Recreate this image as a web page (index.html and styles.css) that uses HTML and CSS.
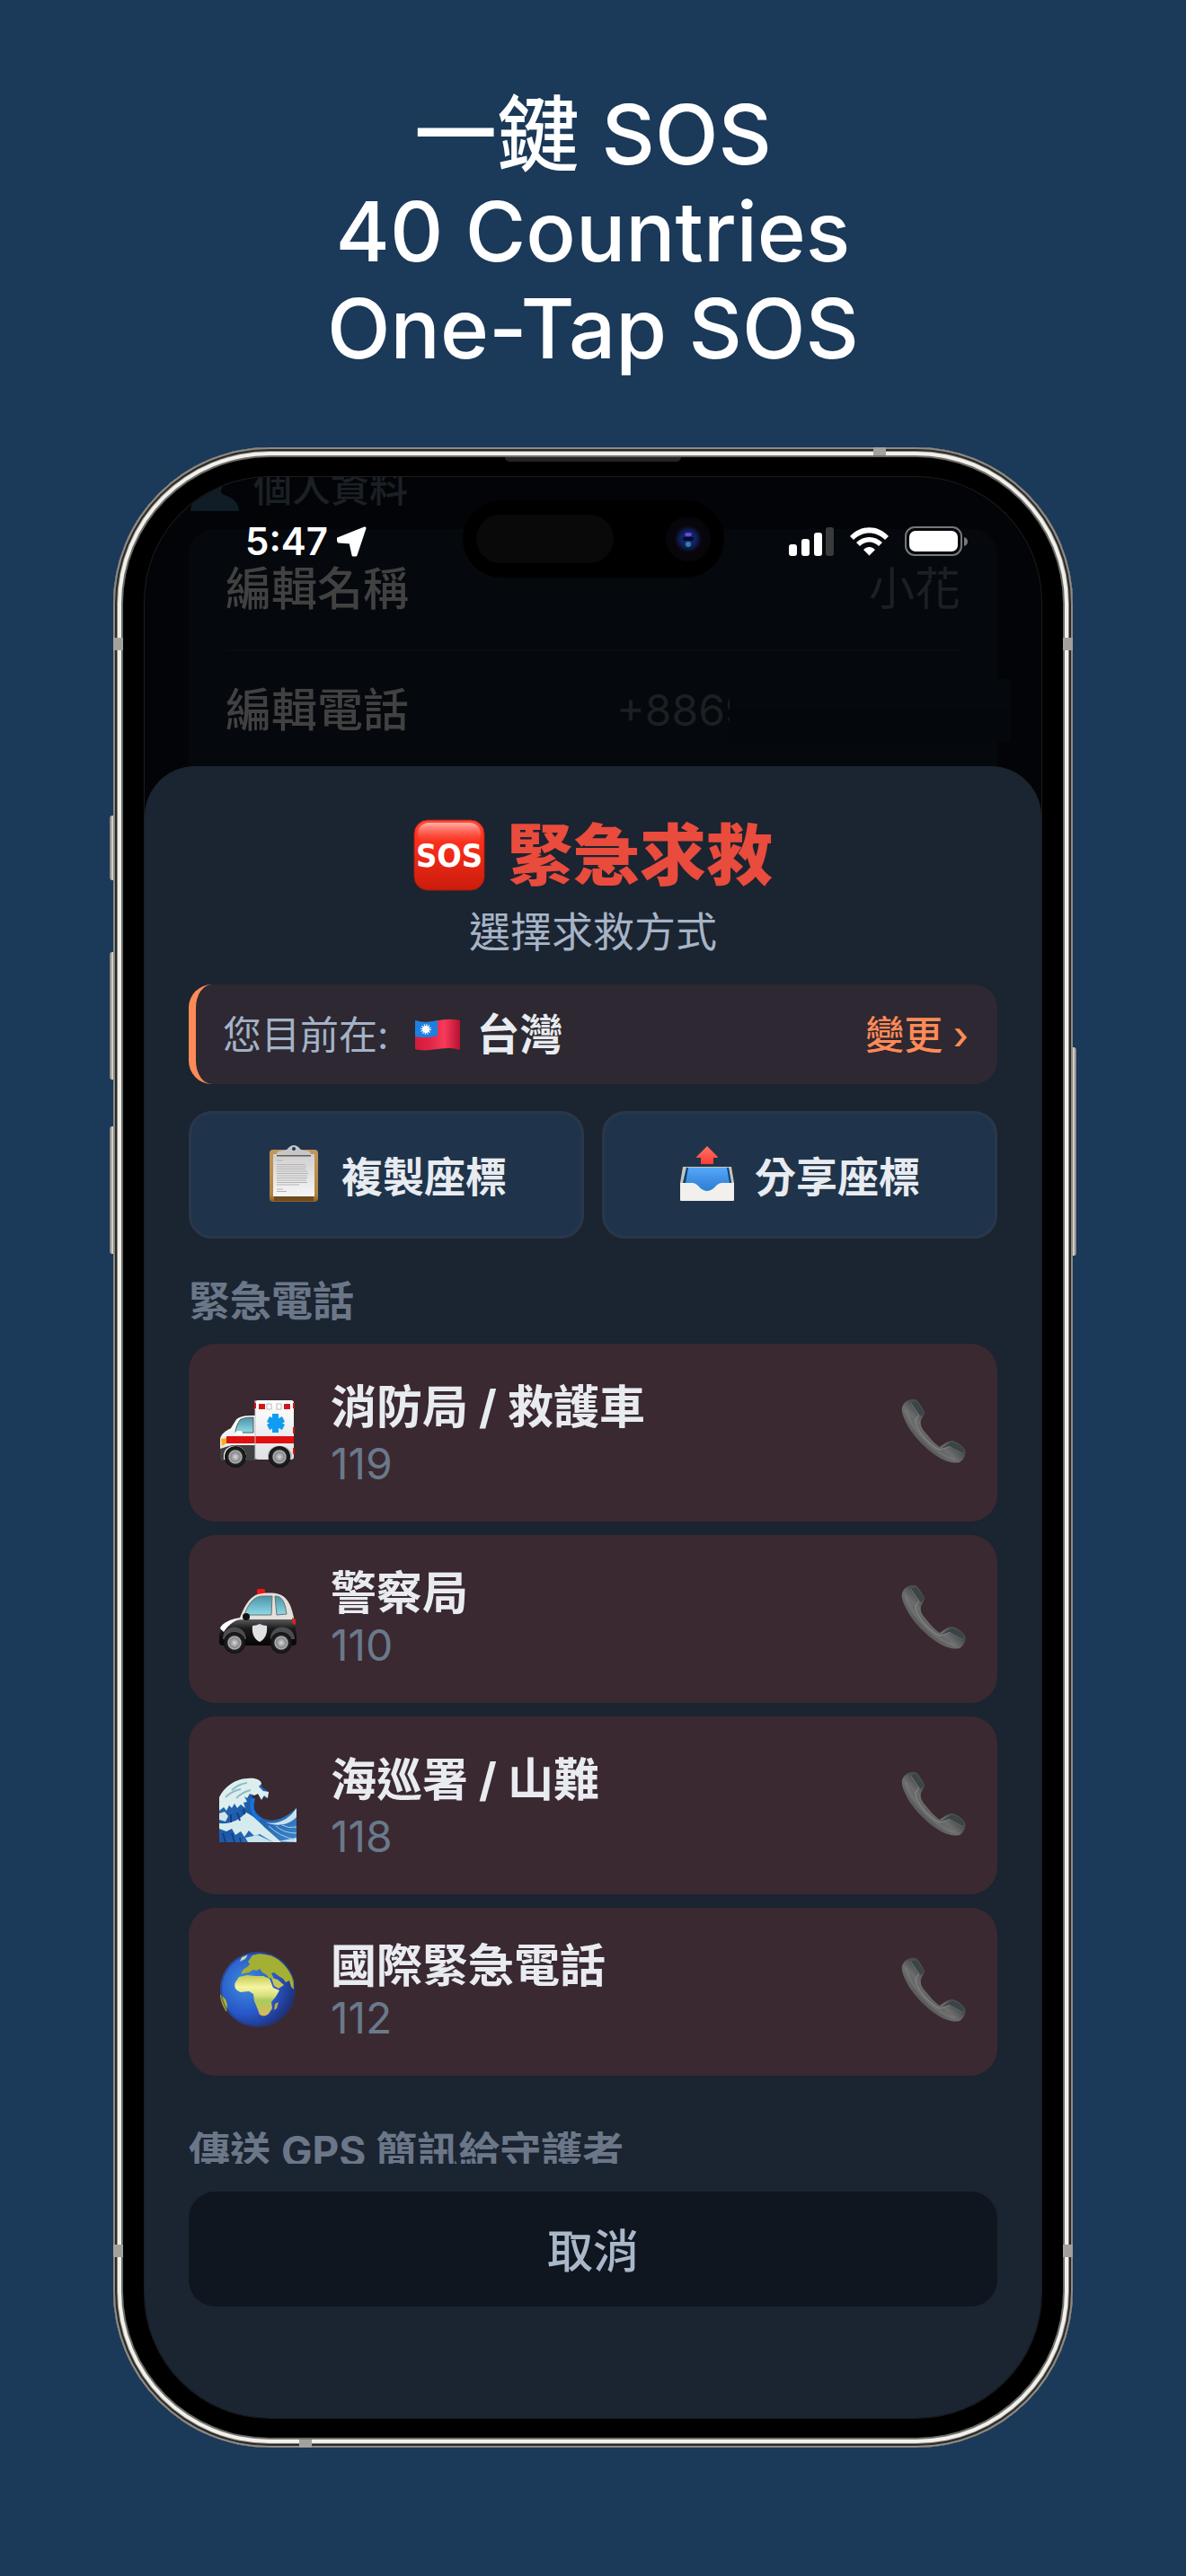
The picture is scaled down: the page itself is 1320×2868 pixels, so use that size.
FILE: index.html
```html
<!DOCTYPE html>
<html lang="zh-Hant">
<head>
<meta charset="utf-8">
<meta name="viewport" content="width=device-width, initial-scale=1">
<title>一鍵 SOS</title>
<link rel="stylesheet" href="styles.css">
</head>
<body>
<svg class="defs" aria-hidden="true">
  <defs>
    <linearGradient id="sosRed" x1="0" y1="0" x2="0" y2="1"><stop offset="0" stop-color="#ff4a38"/><stop offset=".3" stop-color="#fb2f1c"/><stop offset="1" stop-color="#cb1c0c"/></linearGradient>
    <linearGradient id="sosShine" x1="0" y1="0" x2="0" y2="1"><stop offset="0" stop-color="#ffb3ab"/><stop offset="1" stop-color="#ff4030" stop-opacity="0"/></linearGradient>
    <linearGradient id="flagRed" x1="0" y1="0" x2="1" y2="0"><stop offset="0" stop-color="#d21c3c"/><stop offset=".3" stop-color="#dd2444"/><stop offset=".65" stop-color="#f63a5a"/><stop offset="1" stop-color="#b91031"/></linearGradient>
    <linearGradient id="paper" x1="0" y1="0" x2="0" y2="1"><stop offset="0" stop-color="#cfcfcf"/><stop offset="1" stop-color="#f7f7f7"/></linearGradient>
    <linearGradient id="board" x1="0" y1="0" x2="0" y2="1"><stop offset="0" stop-color="#c3975a"/><stop offset=".85" stop-color="#b58442"/><stop offset="1" stop-color="#8a5f28"/></linearGradient>
    <linearGradient id="arrowRed" x1="0" y1="0" x2="0" y2="1"><stop offset="0" stop-color="#ff7468"/><stop offset="1" stop-color="#fb3d33"/></linearGradient>
    <linearGradient id="trayBlue" x1="0" y1="0" x2="0" y2="1"><stop offset="0" stop-color="#55a8fa"/><stop offset=".5" stop-color="#3e8ee4"/><stop offset="1" stop-color="#237fd0"/></linearGradient>
    <linearGradient id="glass" x1="0" y1="0" x2="0" y2="1"><stop offset="0" stop-color="#4a93a6"/><stop offset="1" stop-color="#8edbe8"/></linearGradient>
    <linearGradient id="van" x1="0" y1="0" x2="0" y2="1"><stop offset="0" stop-color="#ffffff"/><stop offset="1" stop-color="#dfe1e3"/></linearGradient>
    <linearGradient id="copBody" x1="0" y1="0" x2="0" y2="1"><stop offset="0" stop-color="#5b5b5d"/><stop offset=".35" stop-color="#1b1b1c"/><stop offset="1" stop-color="#050505"/></linearGradient>
    <linearGradient id="sea" x1="0" y1="0" x2="1" y2="1"><stop offset="0" stop-color="#2a6fb8"/><stop offset=".5" stop-color="#1d59a8"/><stop offset="1" stop-color="#3c88cc"/></linearGradient>
    <radialGradient id="ocean" cx=".35" cy=".42" r=".68"><stop offset="0" stop-color="#3f8fe0"/><stop offset=".6" stop-color="#2756c8"/><stop offset="1" stop-color="#1c2c70"/></radialGradient>
    <linearGradient id="land" x1="0" y1="0" x2="0" y2="1"><stop offset="0" stop-color="#c3c84e"/><stop offset=".3" stop-color="#f6f5a2"/><stop offset=".5" stop-color="#d8df7e"/><stop offset=".62" stop-color="#a9cb5e"/><stop offset="1" stop-color="#dcb85a"/></linearGradient>
    <radialGradient id="hub"><stop offset="0" stop-color="#d9dadd"/><stop offset=".45" stop-color="#85878c"/><stop offset=".58" stop-color="#b5b6b9"/><stop offset=".68" stop-color="#222"/><stop offset="1" stop-color="#101010"/></radialGradient>
    <linearGradient id="handset" x1="0" y1="1" x2="1" y2="0"><stop offset="0" stop-color="#2f3133"/><stop offset=".45" stop-color="#6d6d6d"/><stop offset=".55" stop-color="#4a4e50"/><stop offset="1" stop-color="#3b4245"/></linearGradient>
    <radialGradient id="lens" cx=".5" cy=".5" r=".5"><stop offset="0" stop-color="#1a2d86"/><stop offset=".35" stop-color="#12205c"/><stop offset=".5" stop-color="#0a1230"/><stop offset=".6" stop-color="#08060c"/><stop offset="1" stop-color="#070508"/></radialGradient>
    <symbol id="call" viewBox="0 0 72 72">
      <path d="M1 10C3 3 10 0 16 1C19 2 24 11 26 15C26 19 23 21 22 25C21 30 23 33 27 38C32 44 38 51 43 54C47 51 52 47 56 47C61 47 69 53 71 57C73 62 69 69 65 71C58 73 48 70 38 63C26 55 12 40 6 28C2 20 0 15 1 10Z" fill="url(#handset)"/>
      <path d="M11 5L20 18L16 24C15 30 20 37 27 45C33 51 39 56 43 57L55 53L68 61" fill="none" stroke="#8b8d8d" stroke-width="1.3" opacity=".7"/>
      <path d="M11 5C14 3 17 3 18 5L25 15C25 18 22 21 20 18Z" fill="#3b4447"/><path d="M44 56L55 49C60 48 69 54 70 58L68 61L54 53Z" fill="#3a4346"/>
      <path d="M5 12C8 25 16 36 28 48C37 57 47 65 60 68" fill="none" stroke="#858585" stroke-width="3" opacity=".35"/>
    </symbol>
  </defs>
</svg>

<main class="poster">
  <h1 class="headline">一鍵 SOS<br>40 Countries<br>One-Tap SOS</h1>

  <div class="phone">
    <span class="side side-action"></span>
    <span class="side side-up"></span>
    <span class="side side-down"></span>
    <span class="side side-power"></span>
    <span class="band band-left-top"></span>
    <span class="band band-right-top"></span>
    <span class="band band-left-low"></span>
    <span class="band band-right-low"></span>
    <span class="band band-top"></span>
    <span class="band band-bottom"></span>
    <span class="speaker"></span>

    <div class="screen">
      <section class="profile">
        <h2 class="profile-title">
          <svg class="profile-icon" viewBox="0 0 54 54" aria-hidden="true"><path d="M27 0C36 0 40 7 39 16C38 24 34 28 34 33C36 38 53 37 54 54H0C1 37 18 38 20 33C20 28 16 24 15 16C14 7 18 0 27 0Z" fill="#101c26"/></svg>
          個人資料
        </h2>
        <div class="profile-card">
          <div class="profile-row"><span>編輯名稱</span><span class="profile-value">小花</span></div>
          <div class="profile-row"><span>編輯電話</span><span class="profile-value profile-value-cut">+8869</span><span class="redaction"></span></div>
        </div>
      </section>

      <div class="status">
        <div class="status-time">
          <span>5:47</span>
          <svg width="34" height="34" viewBox="0 0 34 34" aria-hidden="true"><path d="M31 2L21 32H18L15 18L2 17L1 14Z" fill="#fff" stroke="#fff" stroke-width="3" stroke-linejoin="round"/></svg>
        </div>
        <div class="island">
          <span class="island-sensor"></span>
          <svg width="50" height="50" viewBox="0 0 50 50" aria-hidden="true"><circle cx="25" cy="25" r="25" fill="url(#lens)"/><ellipse cx="25" cy="20" rx="4" ry="2" fill="#5a50d8"/><ellipse cx="25" cy="31" rx="3" ry="3" fill="#2f7fb4"/><rect x="19" y="23" width="12" height="4" rx="2" fill="#060a24"/></svg>
        </div>
        <div class="status-icons">
          <svg width="50" height="34" viewBox="0 0 50 34" aria-hidden="true"><rect x="0" y="20" width="9" height="13" rx="3" fill="#fff"/><rect x="14" y="14" width="9" height="19" rx="3" fill="#fff"/><rect x="28" y="7" width="9" height="26" rx="3" fill="#fff"/><rect x="41" y="1" width="9" height="32" rx="3" fill="#3a3a3d"/></svg>
          <svg width="43" height="34" viewBox="0 0 43 34" aria-hidden="true"><path d="M0 11C12-2 31-2 43 11L39 15C29 5 14 5 4 15Z" fill="#fff"/><path d="M7 18C15 10 28 10 36 18L32 22C26 16 17 16 11 22Z" fill="#fff"/><path d="M15 26C19 22 24 22 28 26L22 32Q21 33 21 32Z" fill="#fff"/></svg>
          <svg width="70" height="34" viewBox="0 0 70 34" aria-hidden="true"><rect x="1" y="1" width="62" height="31" rx="10" fill="none" stroke="#77787b" stroke-width="2"/><rect x="5" y="5" width="54" height="23" rx="7" fill="#fff"/><path d="M66 12Q70 13 70 17Q70 21 66 22Z" fill="#77787b"/></svg>
        </div>
      </div>

      <section class="sheet">
        <h2 class="sheet-title">
          <svg width="80" height="80" viewBox="0 0 80 80" role="img" aria-label="SOS">
            <rect x="1" y="1" width="78" height="78" rx="15" fill="url(#sosRed)" stroke="#a81c10" stroke-width="1"/>
            <rect x="5" y="4" width="70" height="24" rx="12" fill="url(#sosShine)"/>
            <text class="sos-text" x="40" y="53" text-anchor="middle" fill="#fff">SOS</text>
          </svg>
          緊急求救
        </h2>
        <p class="sheet-subtitle">選擇求救方式</p>

        <div class="sheet-scroll">
          <div class="location">
            <span class="location-label">您目前在:</span>
            <svg width="50" height="36" viewBox="0 0 50 36" aria-hidden="true">
              <path d="M0 2C16 8 30-3 50 2V35C30 29 16 39 0 34Z" fill="url(#flagRed)"/>
              <path d="M0 2C9 5 17 4 25 2V19C17 21 9 22 0 20Z" fill="#1c80e0"/>
              <circle cx="12" cy="12" r="4" fill="#fff"/><circle cx="12" cy="12" r="5" fill="none" stroke="#fff" stroke-width="2" stroke-dasharray="1 1.6"/>
            </svg>
            <strong class="location-name">台灣</strong>
            <button class="location-change" type="button">變更 ›</button>
          </div>

          <div class="actions">
            <button class="action" type="button">
              <svg width="62" height="64" viewBox="0 0 62 64" aria-hidden="true">
                <rect x="4" y="5" width="54" height="58" rx="4" fill="url(#board)"/>
                <path d="M9 57H53V62H9Z" fill="#6f4b1e"/>
                <rect x="8" y="10" width="46" height="47" fill="url(#paper)"/>
                <path d="M12 11V9Q13 6 20 6Q24 5 26 2Q31-2 36 2Q38 5 42 6Q49 6 50 9V11Z" fill="#c3c7cd"/><path d="M12 11H50V12.500H12Z" fill="#6e5a48"/>
                <circle cx="31" cy="4" r="2" fill="#2c3440"/>
                <path d="M12 17H19M12 21.500H44M12 24H45M12 26.500H44M12 29H46M12 31.500H47M12 34H46M12 36.500H46M12 39H45M12 41.500H46M12 44H37M12 49H19M12 51.500H23" stroke="#b4b4b4" stroke-width="1"/>
              </svg>
              複製座標
            </button>
            <button class="action" type="button">
              <svg width="62" height="62" viewBox="0 0 62 62" aria-hidden="true">
                <path d="M4 23H58L61 41V42H1V41Z" fill="#c9c4ba"/>
                <path d="M8 24H55L58 41L44 52H18L4 41Z" fill="url(#trayBlue)"/>
                <path d="M8 24L4 41H7L10 24ZM55 24L58 41H56L53 24Z" fill="#0e4272"/>
                <path d="M31 0L43 12Q43 13 42 13H38V20H24V13H20Q19 13 19 12Z" fill="url(#arrowRed)"/>
                <path d="M1 41H15C21 41 23 50 31 50C39 50 41 41 47 41H61V60Q61 61 60 61H2Q1 61 1 60Z" fill="#f1f0ed"/>
              </svg>
              分享座標
            </button>
          </div>

          <h3 class="section-label">緊急電話</h3>
          <div class="contacts">
            <button class="contact" type="button">
              <svg class="contact-icon" viewBox="0 -3 86 86" aria-hidden="true">
                <path d="M1 49C2 43 8 40 13 37L18 29C21 24 27 23 40 23V73H3C1 69 1 60 1 49Z" fill="url(#van)"/>
                <rect x="40" y="6" width="43" height="66" rx="3" fill="url(#van)"/>
                <path d="M1 60L14 56H40V73H4Q1 73 1 69Z" fill="#3f4143"/>
                <path d="M8 46H83V54H8Z" fill="#e01010"/><path d="M40 6V72" stroke="#c3c5c8" stroke-width="1"/>
                <path d="M23 28C25 26 31 25 38 25V42H18C18 37 21 31 23 28Z" fill="url(#glass)" stroke="#555" stroke-width="1"/>
                <ellipse cx="22" cy="42" rx="4" ry="2" fill="#fff"/>
                <path d="M2 49L8 48V54L3 57Z" fill="#ffac1c"/>
                <rect x="44" y="10" width="7" height="6" fill="#d31717"/><rect x="72" y="10" width="7" height="6" fill="#d31717"/>
                <rect x="53" y="10" width="5" height="6" fill="#fff" stroke="#bbb" stroke-width="1"/><rect x="64" y="10" width="5" height="6" fill="#fff" stroke="#bbb" stroke-width="1"/>
                <path d="M39 9h2v6h-2zM82 9h2v6h-2zM82 36h2v7h-2zM82 59h2v7h-2z" fill="#d21414"/>
                <path d="M59 21h7v21h-7zM53 30l3-6 17 9-3 6zM70 24l3 6-17 9-3-6z" fill="#109cf0"/>
                <path d="M5 68C5 53 29 53 30 68V72H5Z" fill="#fff"/><path d="M54 68C54 53 80 53 81 68L80 72H54Z" fill="#aeb0b3"/>
                <circle cx="18" cy="69" r="12" fill="url(#hub)"/><circle cx="67" cy="69" r="12" fill="url(#hub)"/>
              </svg>
              <span class="contact-text"><span class="contact-name contact-name-mixed">消防局 / 救護車</span><span class="contact-number">119</span></span>
              <svg class="contact-call" aria-hidden="true"><use href="#call"/></svg>
            </button>
            <button class="contact" type="button">
              <svg class="contact-icon" viewBox="0 -2 86 86" aria-hidden="true">
                <rect x="42" y="10" width="9" height="7" rx="2" fill="#f01414"/>
                <path d="M2 56C3 48 11 44 23 42C29 27 35 16 48 15C70 13 78 18 83 42L84 57Z" fill="#e4e1dc"/>
                <path d="M28 39C33 25 39 18 49 18H59L58 39Z" fill="url(#glass)" stroke="#68706f" stroke-width="1"/><path d="M62 18C70 18 73 24 75 38L64 39Z" fill="url(#glass)" stroke="#68706f" stroke-width="1"/>
                <path d="M2 56C10 45 22 44 30 44H84L86 62V70Q85 73 82 73H4Q0 73 0 69V61Z" fill="url(#copBody)"/>
                <path d="M1 54C3 48 12 44 23 43C14 47 9 52 5 58Z" fill="#fff"/>
                <path d="M81 42L85 44V50L82 49Z" fill="#e02020"/><circle cx="30" cy="41" r="4" fill="#101112"/>
                <path d="M4 66C4 47 30 49 30 66ZM57 66C57 47 84 49 84 66Z" fill="#4c4d50"/>
                <path d="M37 51Q41 51 45 49Q49 51 53 51C54 60 51 66 45 69C39 66 36 60 37 51Z" fill="#e0e1e3"/>
                <circle cx="17" cy="70" r="12" fill="url(#hub)"/><circle cx="69" cy="70" r="12" fill="url(#hub)"/>
              </svg>
              <span class="contact-text"><span class="contact-name">警察局</span><span class="contact-number">110</span></span>
              <svg class="contact-call" aria-hidden="true"><use href="#call"/></svg>
            </button>
            <button class="contact" type="button">
              <svg class="contact-icon" viewBox="0 -1 86 86" aria-hidden="true">
                <path d="M0 36C7 22 20 14 32 14C42 14 47 18 48 24L55 29L53 37L46 32L37 31C34 41 38 52 48 58C61 65 75 57 86 47V85H0Z" fill="url(#sea)"/>
                <path d="M0 35C6 22 20 14 32 14C40 13 47 16 47 20L44 23L49 28L55 29L54 36L50 33L47 38L43 31L39 33L34 31L31 36L28 34L31 40L27 41L29 47L24 43L20 47L17 42L14 47L11 44L8 50L5 46L0 50Z" fill="#dcefee"/>
                <path d="M14 27Q22 20 31 19M7 35Q14 28 24 26M19 36Q26 29 35 27" fill="none" stroke="#8fbcc4" stroke-width="2"/>
                <path d="M0 53L6 51L10 56L7 62L0 60Z" fill="#cfe6ea"/>
                <path d="M0 64C12 65 22 61 30 52C37 55 43 61 51 69L69 85H60L45 76L39 78L33 72L28 79L24 73L18 77L14 70L8 73L0 70Z" fill="#d6ebed"/>
                <path d="M86 47C78 59 66 66 52 63C64 68 78 66 86 57ZM43 77L60 85H32L29 80ZM66 84L86 80V85Z" fill="#c9e2ec"/>
                <path d="M55 67Q68 79 84 82M63 67Q72 75 86 75M70 66Q77 70 86 68" fill="none" stroke="#a9cfe2" stroke-width="1"/>
                <path d="M38 36C34 48 39 57 46 60" fill="none" stroke="#1674e2" stroke-width="4"/>
                <path d="M20 52L23 61M13 54V63M27 48L28 54M4 75L7 85M14 75L17 85M23 80L24 85" stroke="#123f85" stroke-width="2"/>
              </svg>
              <span class="contact-text"><span class="contact-name contact-name-mixed">海巡署 / 山難</span><span class="contact-number">118</span></span>
              <svg class="contact-call" aria-hidden="true"><use href="#call"/></svg>
            </button>
            <button class="contact" type="button">
              <svg class="contact-icon" viewBox="0 0 86 86" aria-hidden="true">
                <circle cx="43" cy="43" r="42" fill="url(#ocean)"/>
                <path d="M25 26C24 23 27 20 31 18L34 15L32 12L37 5L45 3L58 5C70 10 79 21 83 33V43L80 40L78 33L74 35L71 31L66 28L61 24L58 25L61 31L55 30L53 27L48 24L45 20L42 22L38 21L33 24L28 25Z" fill="#a4b034"/>
                <path d="M22 29L31 27L40 28L49 28L56 31L60 41L67 44L63 51L58 57L59 64L55 70C52 73 48 73 45 71L42 63L39 56L38 48L33 45L24 46C18 44 16 40 18 35Z" fill="url(#land)"/>
                <path d="M58 30L65 32L72 38L66 42L61 39Z" fill="#c7c455"/><path d="M62 59L66 57L64 64L61 66Z" fill="#c9a34c"/>
                <path d="M1 48L7 54L9 60L8 68C4 62 1 55 1 48Z" fill="#b2b62d"/><path d="M25 7L32 4L29 9L23 12Z" fill="#c4d7a2"/>
                <circle cx="43" cy="43" r="41" fill="none" stroke="#27356b" stroke-width="2" opacity=".5"/>
              </svg>
              <span class="contact-text"><span class="contact-name">國際緊急電話</span><span class="contact-number">112</span></span>
              <svg class="contact-call" aria-hidden="true"><use href="#call"/></svg>
            </button>
          </div>
          <h3 class="section-label section-label-next">傳送 GPS 簡訊給守護者</h3>
        </div>

        <button class="cancel" type="button">取消</button>
      </section>
    </div>
  </div>
</main>
</body>
</html>
```
FILE: styles.css
```css
* { box-sizing: border-box; }

body {
  margin: 0;
  background: #1b3959;
  font-family: Inter, "Noto Sans CJK TC", sans-serif;
}

h1, h2, h3, p { margin: 0; }

button {
  margin: 0;
  border: 0;
  font-family: inherit;
  cursor: pointer;
}

svg { display: block; flex: none; }

.defs { position: absolute; width: 0; height: 0; }

.poster {
  display: flex;
  flex-direction: column;
  align-items: center;
  padding: 96px 0 143px;
}

.headline {
  color: #fff;
  font-size: 92px;
  font-weight: 500;
  line-height: 108px;
  text-align: center;
}

/* Device */
.phone {
  position: relative;
  width: 81%;
  max-width: 1068px;
  margin-top: 78px;
  padding: 33px 35px;
  border-radius: 174px;
  background: #000;
  box-shadow:
    inset 0 0 0 2px #8d8b85,
    inset 0 0 0 4px #2b2a27,
    inset 0 0 0 5px #8b8983,
    inset 0 0 0 9px #f1f0ec,
    inset 0 0 0 11px #6f6d68;
}

.side {
  position: absolute;
  width: 4px;
  border-radius: 3px 0 0 3px;
  background: linear-gradient(90deg, #77756f, #e8e7e2);
}
.side-action { left: -4px; top: 410px; height: 72px; }
.side-up { left: -4px; top: 562px; height: 142px; }
.side-down { left: -4px; top: 756px; height: 142px; }
.side-power { right: -4px; top: 668px; height: 232px; border-radius: 0 3px 3px 0; background: linear-gradient(270deg, #77756f, #e8e7e2); }

.band { position: absolute; background: #a3a19c; }
.band-left-top, .band-right-top { top: 212px; width: 11px; height: 14px; }
.band-left-low, .band-right-low { bottom: 212px; width: 11px; height: 14px; }
.band-left-top, .band-left-low { left: 0; }
.band-right-top, .band-right-low { right: 0; }
.band-top { top: 0; right: 208px; width: 14px; height: 9px; }
.band-bottom { bottom: 0; left: 207px; width: 14px; height: 9px; }

.speaker {
  position: absolute;
  top: 11px;
  left: 50%;
  width: 196px;
  height: 5px;
  margin-left: -98px;
  border-radius: 0 0 6px 6px;
  background: #242424;
}

.screen {
  position: relative;
  overflow: hidden;
  border-radius: 139px;
  background: #030407;
  box-shadow: 0 0 0 1px #1c1c1e;
}

/* Dimmed page under the sheet */
.profile { padding: 0 49px; }

.profile-title {
  display: flex;
  align-items: flex-end;
  gap: 16px;
  height: 32px;
  color: #1b2025;
  font-size: 43px;
  font-weight: 500;
  line-height: 40px;
}
.profile-icon { width: 54px; height: 54px; margin: 0 0 -6px 2px; }

.profile-card {
  margin-top: 26px;
  padding: 0 41px 60px;
  border-radius: 28px 28px 0 0;
  background: #05080c;
}

.profile-row {
  display: flex;
  align-items: center;
  height: 134px;
  color: #414142;
  font-size: 51px;
  font-weight: 500;
  line-height: 60px;
}
.profile-row + .profile-row { border-top: 2px solid #080b0f; }

.profile-value { margin-left: auto; color: #1c1f23; font-weight: 400; }
.profile-value-cut { width: 126px; overflow: hidden; font-size: 48px; }

.redaction {
  flex: none;
  width: 313px;
  height: 70px;
  margin-right: -56px;
  background: linear-gradient(#05080c 30px, #070a0e 31px, #04070b 32px);
}

/* Status bar */
.status {
  position: absolute;
  top: 26px;
  left: 0;
  right: 0;
  display: grid;
  grid-template-columns: 1fr 291px 1fr;
  align-items: center;
}

.status-time {
  display: flex;
  align-items: center;
  gap: 10px;
  padding: 6px 0 0 112px;
  color: #fff;
  font-size: 42px;
  font-weight: 600;
  line-height: 50px;
}

.island {
  display: flex;
  align-items: center;
  justify-content: space-between;
  height: 86px;
  padding: 0 15px;
  border-radius: 43px;
  background: #000;
}
.island-sensor { width: 153px; height: 54px; border-radius: 27px; background: #090909; }

.status-icons {
  display: flex;
  justify-content: flex-end;
  gap: 18px;
  padding: 6px 82px 0 0;
}

/* SOS sheet */
.sheet {
  position: relative;
  margin-top: -64px;
  padding: 57px 49px 124px;
  border-radius: 56px 56px 0 0;
  background: #1b2431;
}

.sheet-title {
  display: flex;
  align-items: center;
  justify-content: center;
  gap: 24px;
  color: #e94b3c;
  font-size: 74px;
  font-weight: 800;
  line-height: 84px;
}
.sos-text { font-size: 36px; font-weight: 700; font-family: "Liberation Sans Narrow", "DejaVu Sans Condensed", Lato, sans-serif; }

.sheet-subtitle {
  margin-top: 15px;
  color: #a6b4c6;
  font-size: 46px;
  line-height: 56px;
  text-align: center;
}

.sheet-scroll {
  max-height: 1313px;
  margin-top: 31px;
  overflow-y: auto;
  scrollbar-width: none;
}

.location {
  display: flex;
  align-items: center;
  height: 111px;
  padding: 0 32px 0 30px;
  border-left: 8px solid #ff8a57;
  border-radius: 26px;
  background: #2d2831;
}
.location-label { margin-right: 30px; color: #a3b2c7; font-size: 43px; line-height: 56px; }
.location-name { margin-left: 18px; color: #e8ebf0; font-size: 48px; font-weight: 700; line-height: 56px; }
.location-change {
  margin-left: auto;
  padding: 0;
  background: none;
  color: #ff8a57;
  font-size: 43px;
  font-weight: 500;
  line-height: 56px;
}

.actions {
  display: grid;
  grid-template-columns: 1fr 1fr;
  gap: 20px;
  margin-top: 30px;
}
.action {
  display: flex;
  align-items: center;
  justify-content: center;
  gap: 22px;
  height: 142px;
  padding: 0 0 2px;
  border: 3px solid #2a374b;
  border-radius: 26px;
  background: #1f344b;
  color: #e8ebf0;
  font-size: 46px;
  font-weight: 700;
}

.section-label {
  margin-top: 41px;
  color: #6b7788;
  font-size: 46px;
  font-weight: 700;
  line-height: 56px;
}
.section-label-next { margin-top: 56px; }

.contacts {
  display: flex;
  flex-direction: column;
  gap: 15px;
  margin-top: 20px;
}
.contact {
  display: flex;
  align-items: center;
  gap: 38px;
  padding: 35px 35px 40px 34px;
  border-radius: 30px;
  background: #3a2931;
  text-align: left;
}
.contact-icon { width: 86px; height: 86px; }
.contact-text { display: flex; flex: 1; flex-direction: column; gap: 4px; }
.contact-name { color: #e8ebf0; font-size: 51px; font-weight: 700; line-height: 60px; }
.contact-name-mixed { line-height: 71px; }
.contact-number { color: #6a798b; font-size: 48px; line-height: 48px; }
.contact-call { width: 72px; height: 72px; }

.cancel {
  display: block;
  width: 100%;
  height: 128px;
  margin-top: 31px;
  padding: 0 0 2px;
  border-radius: 30px;
  background: #0f161f;
  color: #a9b7c9;
  font-size: 51px;
  font-weight: 500;
}
```
